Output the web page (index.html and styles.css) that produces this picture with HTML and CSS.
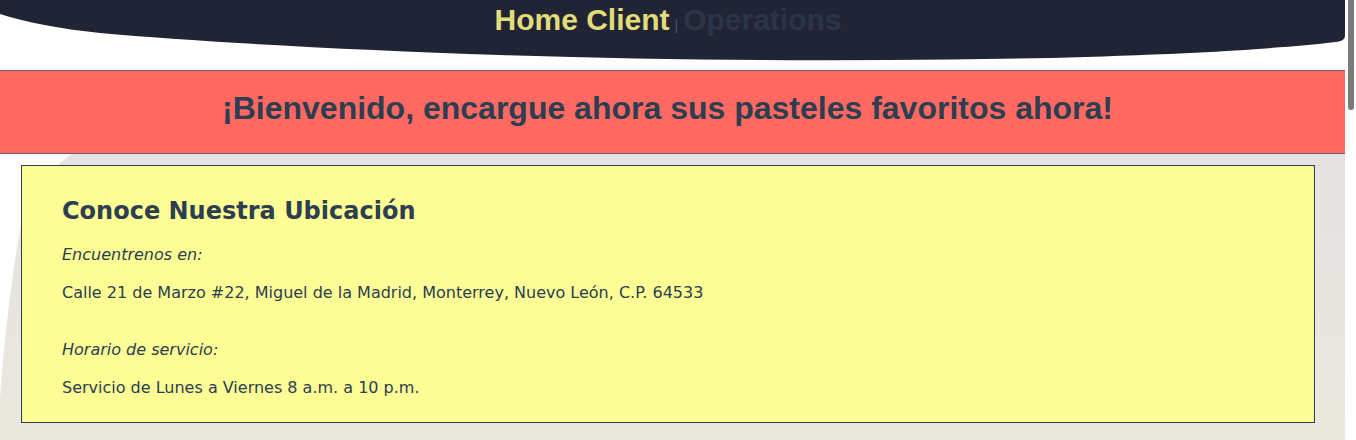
FILE: index.html
```html
<!DOCTYPE html>
<html lang="es">
<head>
<meta charset="utf-8">
<title>Pastelería</title>
<link rel="stylesheet" href="styles.css">
</head>
<body>
<header class="topbar">
  <nav class="nav">
    <a class="nav-link nav-active" href="#">Home Client</a>
    <span class="nav-sep">|</span>
    <a class="nav-link nav-muted" href="#">Operations</a>
  </nav>
</header>
<section class="banner">
  <h1 class="banner-title">¡Bienvenido, encargue ahora sus pasteles favoritos ahora!</h1>
</section>
<main class="main">
  <article class="card">
    <h2 class="card-title">Conoce Nuestra Ubicación</h2>
    <p class="card-label">Encuentrenos en:</p>
    <p class="card-text">Calle 21 de Marzo #22, Miguel de la Madrid, Monterrey, Nuevo León, C.P. 64533</p>
    <p class="card-label group-gap">Horario de servicio:</p>
    <p class="card-text">Servicio de Lunes a Viernes 8 a.m. a 10 p.m.</p>
  </article>
</main>
<div class="scrollbar" aria-hidden="true"><div class="scrollbar-thumb"></div></div>
</body>
</html>
```
FILE: styles.css
```css
html, body {
  margin: 0;
  padding: 0;
  background: #ffffff;
}

html {
  scrollbar-width: none;
}

::-webkit-scrollbar {
  display: none;
}

body {
  margin-right: 11px;
}

.scrollbar {
  position: fixed;
  top: 0;
  right: 0;
  width: 11px;
  height: 100vh;
  background: #ffffff;
}

.scrollbar-thumb {
  margin-left: 3px;
  width: 6px;
  height: 110px;
  background: #7b7b7b;
  border-radius: 0 0 3px 3px;
}

.topbar {
  height: 62px;
  margin-bottom: 8px;
  background: #212434;
  clip-path: path('M0,0 H1345 V36 Q1345,41 1336,42 C1250,52 1100,58 950,59.5 C800,61 650,60 500,55 C350,50 200,42 100,33 C60,29 25,22 0,14 Z');
}

.nav {
  display: flex;
  justify-content: center;
  align-items: baseline;
  gap: 5px;
  padding: 3px 9px 0 0;
  font-family: "Liberation Sans", Arial, sans-serif;
  font-weight: bold;
}

.nav-link {
  font-size: 30px;
  line-height: 34px;
  text-decoration: none;
}

.nav-active {
  color: #e3dc7b;
}

.nav-muted {
  color: #2a3648;
}

.nav-sep {
  font-size: 14px;
  font-weight: normal;
  color: #4f5566;
}

.banner {
  height: 82px;
  display: flex;
  align-items: center;
  justify-content: center;
  padding-right: 10px;
  background: #ff6961;
  border-top: 1px solid #606060;
  border-bottom: 1px solid #606060;
}

.banner-title {
  margin: 0 0 7px;
  font-family: "Liberation Sans", Arial, sans-serif;
  font-weight: bold;
  font-size: 32px;
  line-height: 37px;
  color: #2c3e50;
}

.main {
  min-height: 1606px;
  padding: 11px 30px 0 21px;
  box-sizing: border-box;
  background:
    url("data:image/svg+xml;utf8,<svg xmlns='http://www.w3.org/2000/svg' width='80' height='250'><path d='M0,0 H72 C50,15 30,40 21,72 C10,130 4,190 0,245 Z' fill='white'/></svg>") no-repeat 0 0,
    linear-gradient(#e4e3e1 0, #ece8df 290px, #ece8df 100%);
}

.card {
  background: #fdfd96;
  border: 1px solid #2c3e50;
  padding: 31px 40px 5px;
  color: #2c3e50;
  font-family: "DejaVu Sans", Verdana, sans-serif;
}

.card-title {
  margin: 0 0 21px;
  font-size: 24px;
  line-height: 28px;
  font-weight: bold;
}

.card-label,
.card-text {
  margin: 0 0 20px;
  font-size: 16px;
  line-height: 18px;
}

.card-label {
  font-style: italic;
}

.group-gap {
  margin-top: 39px;
}
```
